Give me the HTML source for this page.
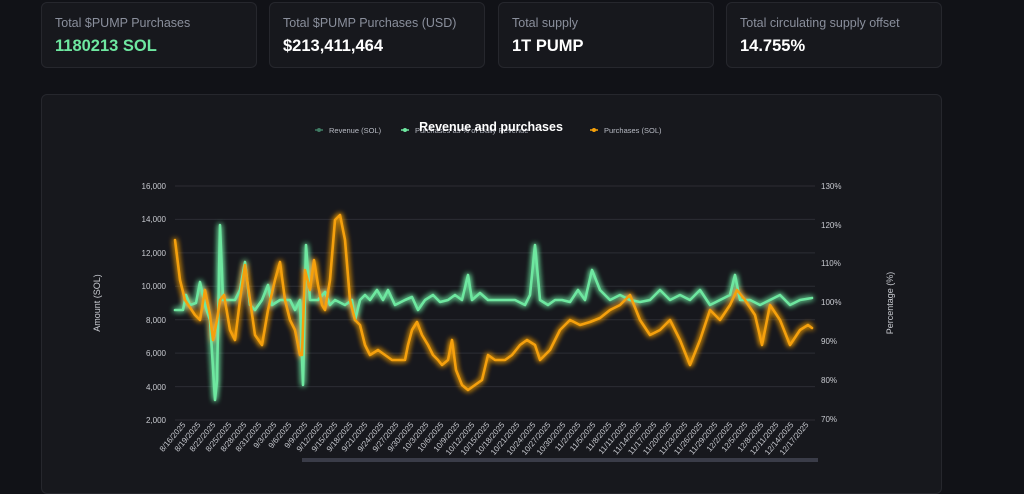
<!DOCTYPE html>
<html><head><meta charset="utf-8"><style>
html,body{margin:0;padding:0;background:#111217;width:1024px;height:462px;overflow:hidden;font-family:"Liberation Sans",sans-serif}
.card{position:absolute;top:2px;height:66px;width:216px;background:#17181d;border:1px solid #26272d;border-radius:6px;box-sizing:border-box}
.card .l{position:absolute;left:13px;top:13px;font-size:12.5px;color:#8a8f9c}
.card .v{position:absolute;left:13px;top:34px;font-size:16.5px;font-weight:bold;color:#fff}
.chart{position:absolute;left:41px;top:94px;width:901px;height:400px;background:#17181d;border:1px solid #26272d;border-radius:6px;box-sizing:border-box}
svg{position:absolute;left:0;top:0}
</style></head><body>
<div class="card" style="left:41px"><div class="l">Total $PUMP Purchases</div><div class="v" style="color:#6ee7a0">1180213 SOL</div></div>
<div class="card" style="left:269px"><div class="l">Total $PUMP Purchases (USD)</div><div class="v">$213,411,464</div></div>
<div class="card" style="left:498px"><div class="l">Total supply</div><div class="v">1T PUMP</div></div>
<div class="card" style="left:726px"><div class="l">Total circulating supply offset</div><div class="v">14.755%</div></div>
<div class="chart"></div>
<svg width="1024" height="462" viewBox="0 0 1024 462" font-family="Liberation Sans, sans-serif">
<defs>
<filter id="g" x="-10%" y="-20%" width="120%" height="140%"><feGaussianBlur stdDeviation="3" result="b"/><feMerge><feMergeNode in="b"/><feMergeNode in="b"/><feMergeNode in="SourceGraphic"/></feMerge></filter>
</defs>
<g stroke="#2c2d34" stroke-width="1">
<line x1="175" x2="815" y1="186" y2="186"/><line x1="175" x2="815" y1="219.4" y2="219.4"/><line x1="175" x2="815" y1="252.9" y2="252.9"/><line x1="175" x2="815" y1="286.3" y2="286.3"/><line x1="175" x2="815" y1="319.7" y2="319.7"/><line x1="175" x2="815" y1="353.1" y2="353.1"/><line x1="175" x2="815" y1="386.6" y2="386.6"/><line x1="175" x2="815" y1="420" y2="420"/>
</g>
<g font-size="8" fill="#c8cad0" text-anchor="end">
<text x="166" y="189">16,000</text><text x="166" y="222">14,000</text><text x="166" y="256">12,000</text><text x="166" y="289">10,000</text><text x="166" y="323">8,000</text><text x="166" y="356">6,000</text><text x="166" y="390">4,000</text><text x="166" y="423">2,000</text>
</g>
<g font-size="8" fill="#c8cad0">
<text x="821" y="189">130%</text><text x="821" y="228">120%</text><text x="821" y="266">110%</text><text x="821" y="305">100%</text><text x="821" y="344">90%</text><text x="821" y="383">80%</text><text x="821" y="422">70%</text>
</g>
<text transform="translate(100,303) rotate(-90)" font-size="9" fill="#c8cad0" text-anchor="middle">Amount (SOL)</text>
<text transform="translate(893,303) rotate(-90)" font-size="9" fill="#c8cad0" text-anchor="middle">Percentage (%)</text>
<g font-size="7.5" fill="#b8bbc4">
<line x1="315" x2="323" y1="130" y2="130" stroke="#3f7a63" stroke-width="1.5"/><circle cx="319" cy="130" r="2" fill="#3f7a63"/><text x="329" y="133">Revenue (SOL)</text>
<line x1="401" x2="409" y1="130" y2="130" stroke="#6ee7a0" stroke-width="1.5"/><circle cx="405" cy="130" r="2" fill="#6ee7a0"/><text x="415" y="133">Purchases as % of Daily Revenue</text>
<line x1="590" x2="598" y1="130" y2="130" stroke="#f5a00a" stroke-width="1.5"/><circle cx="594" cy="130" r="2" fill="#f5a00a"/><text x="604" y="133">Purchases (SOL)</text>
</g>
<text x="491" y="131" font-size="12.5" font-weight="bold" fill="#fff" text-anchor="middle">Revenue and purchases</text>
<g fill="none" stroke-linejoin="round" stroke-linecap="round" filter="url(#g)" stroke-width="2.6">
<polyline stroke="#6ee7a0" points="175,310 183,310 186,295 190,305 196,303 200,282 205,305 210,320 215,400 217,380 220,225 223,300 228,300 235,300 240,290 245,262 250,305 255,310 262,300 268,285 272,305 280,300 290,300 295,310 300,300 303,385 306,245 310,300 318,300 325,292 330,305 335,300 345,305 352,300 355,320 360,300 365,295 370,300 377,290 383,300 388,290 395,305 405,300 412,297 418,310 425,300 433,295 440,302 448,300 455,295 462,300 468,275 472,300 480,293 488,300 495,300 505,300 515,300 525,305 530,295 535,245 540,300 548,305 555,300 562,300 570,302 578,290 585,300 592,270 600,290 610,300 620,295 630,300 640,302 650,300 660,290 670,300 680,295 690,300 700,290 710,305 720,300 730,295 735,275 740,300 750,300 760,305 770,300 780,295 790,305 800,300 812,298"/>
<polyline stroke="#f5a00a" points="175,240 180,280 185,300 195,315 200,320 205,290 210,315 213,340 217,320 220,300 224,295 230,330 235,340 240,300 245,265 250,300 255,335 262,345 268,310 275,280 280,262 285,300 290,320 295,330 300,355 302,355 305,270 310,290 314,260 318,285 322,305 325,310 330,280 335,220 340,215 345,240 350,300 355,320 360,325 365,345 370,355 378,350 385,355 392,360 400,360 405,360 408,345 412,330 417,322 422,335 428,345 433,355 438,360 442,365 448,360 452,340 456,370 462,385 468,390 475,385 482,380 488,355 495,360 505,360 512,355 520,345 527,340 535,345 540,360 545,355 550,350 555,340 560,330 570,320 580,325 590,322 600,318 610,310 620,305 630,295 640,320 650,335 660,330 670,320 680,340 690,365 700,340 710,310 720,320 730,305 737,290 745,300 755,315 762,345 770,305 780,320 790,345 800,330 808,325 812,328"/>
</g>
<g font-size="8" fill="#c8cad0" text-anchor="end">
<text transform="translate(186,425) rotate(-50)">8/16/2025</text><text transform="translate(201,425) rotate(-50)">8/19/2025</text><text transform="translate(216,425) rotate(-50)">8/22/2025</text><text transform="translate(232,425) rotate(-50)">8/25/2025</text><text transform="translate(247,425) rotate(-50)">8/28/2025</text><text transform="translate(262,425) rotate(-50)">8/31/2025</text><text transform="translate(277,425) rotate(-50)">9/3/2025</text><text transform="translate(292,425) rotate(-50)">9/6/2025</text><text transform="translate(308,425) rotate(-50)">9/9/2025</text><text transform="translate(323,425) rotate(-50)">9/12/2025</text><text transform="translate(338,425) rotate(-50)">9/15/2025</text><text transform="translate(353,425) rotate(-50)">9/18/2025</text><text transform="translate(368,425) rotate(-50)">9/21/2025</text><text transform="translate(384,425) rotate(-50)">9/24/2025</text><text transform="translate(399,425) rotate(-50)">9/27/2025</text><text transform="translate(414,425) rotate(-50)">9/30/2025</text><text transform="translate(429,425) rotate(-50)">10/3/2025</text><text transform="translate(444,425) rotate(-50)">10/6/2025</text><text transform="translate(460,425) rotate(-50)">10/9/2025</text><text transform="translate(475,425) rotate(-50)">10/12/2025</text><text transform="translate(490,425) rotate(-50)">10/15/2025</text><text transform="translate(505,425) rotate(-50)">10/18/2025</text><text transform="translate(520,425) rotate(-50)">10/21/2025</text><text transform="translate(536,425) rotate(-50)">10/24/2025</text><text transform="translate(551,425) rotate(-50)">10/27/2025</text><text transform="translate(566,425) rotate(-50)">10/30/2025</text><text transform="translate(581,425) rotate(-50)">11/2/2025</text><text transform="translate(596,425) rotate(-50)">11/5/2025</text><text transform="translate(612,425) rotate(-50)">11/8/2025</text><text transform="translate(627,425) rotate(-50)">11/11/2025</text><text transform="translate(642,425) rotate(-50)">11/14/2025</text><text transform="translate(657,425) rotate(-50)">11/17/2025</text><text transform="translate(672,425) rotate(-50)">11/20/2025</text><text transform="translate(688,425) rotate(-50)">11/23/2025</text><text transform="translate(703,425) rotate(-50)">11/26/2025</text><text transform="translate(718,425) rotate(-50)">11/29/2025</text><text transform="translate(733,425) rotate(-50)">12/2/2025</text><text transform="translate(748,425) rotate(-50)">12/5/2025</text><text transform="translate(764,425) rotate(-50)">12/8/2025</text><text transform="translate(779,425) rotate(-50)">12/11/2025</text><text transform="translate(794,425) rotate(-50)">12/14/2025</text><text transform="translate(809,425) rotate(-50)">12/17/2025</text>
</g>
<rect x="302" y="458" width="516" height="4" fill="#3a3c48"/>
</svg>
</body></html>
